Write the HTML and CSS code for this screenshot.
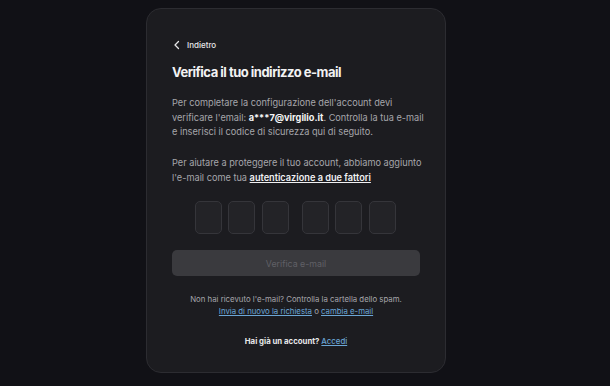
FILE: index.html
```html
<!DOCTYPE html>
<html lang="it">
<head>
<meta charset="utf-8">
<title>Verifica e-mail</title>
<link rel="stylesheet" href="styles.css">
</head>
<body>
<main class="card">
  <a class="back" href="#">
    <svg class="back-icon" width="8" height="10" viewBox="0 0 8 10"><path d="M5.5 1.5 L2 5 L5.5 8.5" fill="none" stroke="#e6e6e8" stroke-width="1.3" stroke-linecap="round" stroke-linejoin="round"/></svg>
    <span>Indietro</span>
  </a>
  <h1 class="title">Verifica il tuo indirizzo e-mail</h1>
  <p class="text">Per completare la configurazione dell'account devi<br>verificare l'email: <strong>a***7@virgilio.it</strong>. Controlla la tua e-mail<br>e inserisci il codice di sicurezza qui di seguito.</p>
  <p class="text text-2">Per aiutare a proteggere il tuo account, abbiamo aggiunto<br>l'e-mail come tua <a class="strong-link" href="#">autenticazione a due fattori</a></p>
  <div class="otp">
    <div class="otp-group">
      <span class="otp-box"></span><span class="otp-box"></span><span class="otp-box"></span>
    </div>
    <div class="otp-group">
      <span class="otp-box"></span><span class="otp-box"></span><span class="otp-box"></span>
    </div>
  </div>
  <button class="verify" type="button">Verifica e-mail</button>
  <p class="help">Non hai ricevuto l'e-mail? Controlla la cartella dello spam.<br><a class="link" href="#">Invia di nuovo la richiesta</a> o <a class="link" href="#">cambia e-mail</a></p>
  <p class="login">Hai già un account? <a class="link" href="#">Accedi</a></p>
</main>
</body>
</html>
```

FILE: styles.css
```css
* { box-sizing: border-box; }
html, body {
  margin: 0;
  padding: 0;
  background: #111116;
  height: 386px;
  overflow: hidden;
  font-family: Inter, "Liberation Sans", sans-serif;
}
.card {
  margin: 8px 0 0 146px;
  width: 300px;
  height: 365px;
  background: #1c1c20;
  border: 1px solid #2c2c31;
  border-radius: 15px;
  padding: 30px 25px 0 25px;
}
.back {
  display: flex;
  align-items: center;
  gap: 6px;
  height: 12px;
  font-size: 8px;
  line-height: 12px;
  color: #e6e6e8;
  text-decoration: none;
  font-weight: 500;
}
.back-icon { margin-left: 1px; }
.title {
  margin: 11px 0 0 0;
  font-size: 13px;
  line-height: 20px;
  font-weight: 700;
  color: #f2f2f3;
  letter-spacing: -0.5px;
}
.text {
  margin: 14px 0 0 0;
  font-size: 9.2px;
  line-height: 14.5px;
  color: #a6a6ab;
  white-space: nowrap;
}
.text strong { color: #f5f5f6; font-weight: 700; }
.text-2 { margin-top: 16.5px; }
.strong-link {
  color: #f0f0f2;
  font-weight: 600;
  text-decoration: underline;
}
.otp {
  margin-top: 16px;
  display: flex;
  justify-content: center;
  gap: 13px;
  padding-right: 2px;
}
.otp-group { display: flex; gap: 6.5px; }
.otp-box {
  width: 27px;
  height: 33px;
  background: #232327;
  border: 1px solid #35353a;
  border-radius: 5px;
}
.verify {
  display: block;
  margin-top: 16px;
  width: 100%;
  height: 26px;
  border: 0;
  border-radius: 5px;
  background: #3a3a3e;
  color: #606066;
  font-family: inherit;
  font-size: 8.8px;
  padding: 0;
}
.help {
  margin: 17px 0 0 0;
  text-align: center;
  font-size: 7.8px;
  line-height: 12px;
  color: #a6a6ab;
}
.link { color: #6ba6d6; text-decoration: underline; }
.login {
  margin: 18px 0 0 0;
  text-align: center;
  font-size: 7.8px;
  line-height: 12px;
  color: #e8e8ea;
  font-weight: 700;
}
.login .link { font-weight: 500; }
```
